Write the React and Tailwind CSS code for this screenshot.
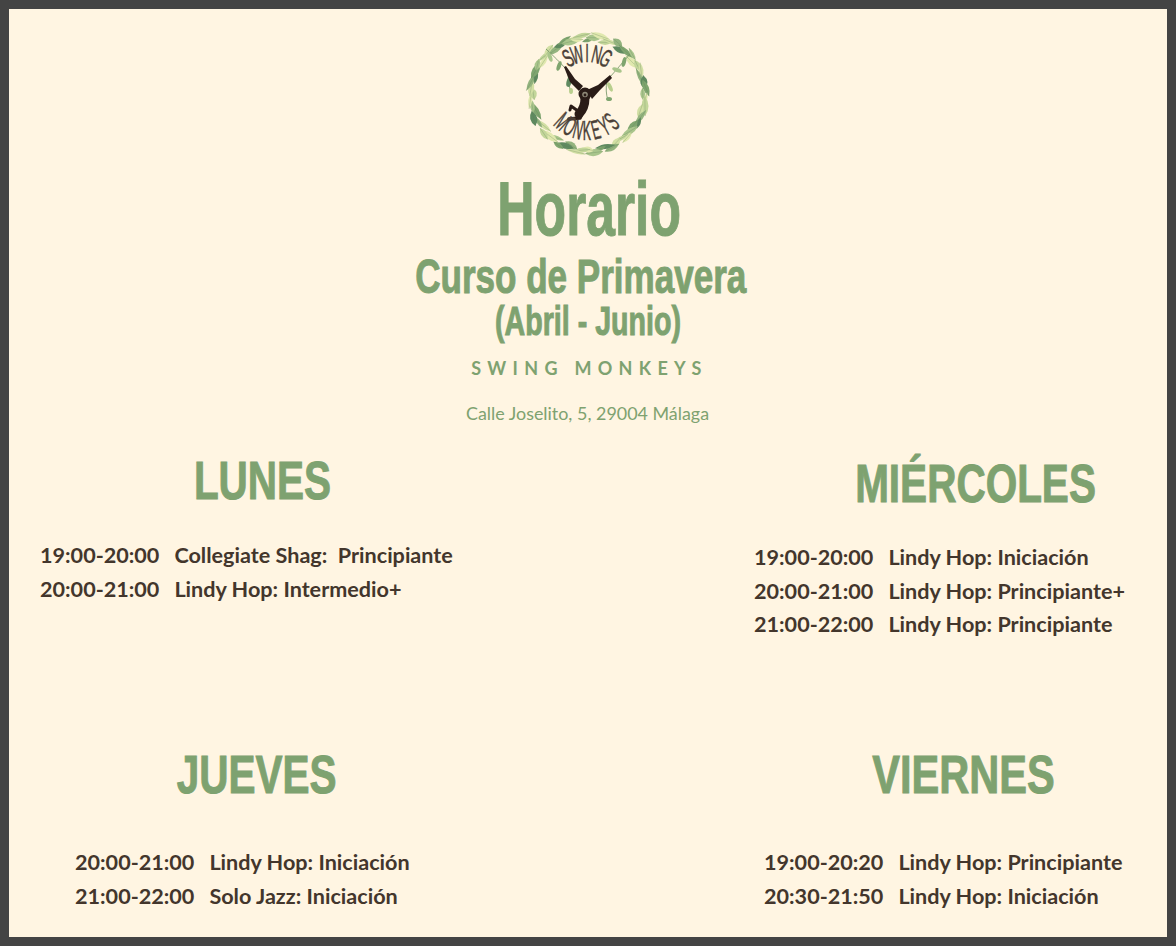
const LEAF_COLORS = ['#7fa56f', '#c3d69a', '#5f8a60', '#e0e8ae', '#94b47f', '#a9c58c', '#d2dfa4'];

// wreath, spread by hand-ish jitter so it doesn't look like a gear
const LEAVES = Array.from({ length: 60 }, (_, i) => {
  const wob = (i * 37) % 11;
  return {
    a: (i / 60) * 360,
    r: 54 + (i % 3) * 2 + wob * 0.15,
    color: LEAF_COLORS[(i * 5) % 7],
    len: 6 + ((i * 7) % 5),
    tilt: ((i * 13) % 36) - 18,
    w: 2 + ((i * 3) % 4) * 0.5,
  };
});

const TOP_LETTERS = 'SWING'.split('');
const BOTTOM_LETTERS = 'MONKEYS'.split('');

function Logo() {
  return (
    <svg viewBox="0 0 160 145" className="w-[160px] h-[145px] block" aria-label="Swing Monkeys">
      {LEAVES.map((l, i) => (
        <g key={i} transform={`translate(78 74) rotate(${l.a}) translate(0 ${-l.r}) rotate(${l.tilt})`}>
          <path d={`M ${-l.len} 0 Q 0 ${-l.w * 2} ${l.len} 0 Q 0 ${l.w * 2} ${-l.len} 0 Z`} fill={l.color} />
          <path d={`M ${-l.len} 0 L ${l.len} 0`} stroke="#5c7d52" strokeWidth="0.25" />
        </g>
      ))}

      {/* vines */}
      <path d="M 55 48 Q 48 40 36 29" fill="none" stroke="#6d8f60" strokeWidth="0.8" />
      <path d="M 100 57 Q 108 48 120 34" fill="none" stroke="#6d8f60" strokeWidth="0.8" />
      <path d="M 97 60 Q 95 72 98 80" fill="none" stroke="#6d8f60" strokeWidth="0.8" />
      <path d="M 58 55 L 60 70" fill="none" stroke="#6d8f60" strokeWidth="0.8" />
      <ellipse cx="40" cy="37" rx="2" ry="5" fill="#a9c58c" transform="rotate(-20 40 37)" />
      <ellipse cx="49" cy="46" rx="2" ry="5" fill="#7fa56f" transform="rotate(20 49 46)" />
      <ellipse cx="114" cy="42" rx="2" ry="5" fill="#7fa56f" transform="rotate(15 114 42)" />
      <ellipse cx="107" cy="50" rx="5" ry="2" fill="#a9c58c" transform="rotate(20 107 50)" />
      <ellipse cx="100" cy="67" rx="2" ry="5" fill="#b9cf8e" transform="rotate(-25 100 67)" />
      <ellipse cx="99" cy="79" rx="3" ry="2" fill="#7fa56f" />
      <ellipse cx="59" cy="62" rx="2.5" ry="5" fill="#5f8a60" transform="rotate(15 59 62)" />
      <ellipse cx="61" cy="71" rx="2" ry="3" fill="#b9cf8e" />

      {/* gibbon */}
      <path d="M54 47 L56 46 L65 59 L73 66 L69 71 L60 62 Z" fill="#2a1c17" />
      <path d="M100 55 L102 58 L90 70 L82 79 L77 70 L88 65 Z" fill="#2a1c17" />
      <g fill="none" stroke="#2a1c17" strokeLinecap="round" strokeLinejoin="round">
        <path d="M 75 78 Q 75 88 69 94" strokeWidth="9" />
        <path d="M 68 91 L 61 86 L 60 90" strokeWidth="3" />
        <path d="M 72 93 L 70 98 L 59 99" strokeWidth="3.5" />
      </g>
      <circle cx="75" cy="74" r="6.5" fill="#2a1c17" />
      <circle cx="75" cy="74.5" r="2.8" fill="#8f8a78" />
      <circle cx="75" cy="75" r="1.4" fill="#2a1c17" />

      {TOP_LETTERS.map((ch, i) => {
        const deg = -28 + i * 14;
        return (
          <text
            key={ch}
            transform={`translate(77 74) rotate(${deg}) translate(0 -32) scale(0.52 1)`}
            textAnchor="middle"
            stroke="#4a3f37"
            strokeWidth="0.5"
            className="fill-[#4a3f37] font-['Liberation_Sans',sans-serif] text-[25px]"
          >{ch}</text>
        );
      })}
      {BOTTOM_LETTERS.map((ch, i) => {
        const deg = -42 + i * 14;
        return (
          <text
            key={ch}
            transform={`translate(77 74) rotate(${-deg}) translate(0 46) scale(0.46 1)`}
            textAnchor="middle"
            stroke="#4a3f37"
            strokeWidth="0.5"
            className="fill-[#4a3f37] font-['Liberation_Sans',sans-serif] text-[27px]"
          >{ch}</text>
        );
      })}
    </svg>
  );
}

const HAND = "font-['Liberation_Sans',sans-serif] font-bold text-[#7ea270] whitespace-nowrap [-webkit-text-stroke:1px_#7ea270]";

function Day({ title, titleClass, rows, className, rowClass }) {
  return (
    <section className={className}>
      <h2 className={`${HAND} w-fit text-[54px] leading-[60px] scale-x-[.75] ${titleClass}`}>{title}</h2>
      <ul className={`font-['Lato',sans-serif] font-bold text-[21.6px] leading-[33.6px] text-[#43362c] ${rowClass}`}>
        {rows.map(([time, name]) => (
          <li key={time} className="flex gap-[15px] whitespace-pre">
            <span>{time}</span>
            <span>{name}</span>
          </li>
        ))}
      </ul>
    </section>
  );
}

export default function App() {
  return (
    <div className="w-[1176px] h-[946px] overflow-hidden border-[9px] border-[#444444] bg-[#fff5e2]">
      <header className="flex flex-col items-center pl-[3px] pt-[11px]">
        <Logo />
        <h1 className={`${HAND} text-[76px] leading-[80px] mt-[4px] scale-x-[.68]`}>Horario</h1>
        <p className={`${HAND} text-[48px] leading-[52px] mt-[2px] mr-[17px] scale-x-[.73]`}>Curso de Primavera</p>
        <p className={`${HAND} text-[40px] leading-[44px] -mt-[4px] mr-[4px] scale-x-[.715]`}>(Abril - Junio)</p>
        <p className="mt-[14px] font-['Lato',sans-serif] font-bold text-[18px] leading-[22px] tracking-[0.35em] text-[#7ea270]">SWING MONKEYS</p>
        <p className="mt-[22px] mr-[4px] font-['Lato',sans-serif] text-[17.9px] leading-[24px] text-[#7ea270]">Calle Joselito, 5, 29004 Málaga</p>
      </header>

      <div className="mt-[25px] grid grid-cols-2 grid-rows-[294px_auto]">
        <Day
          title="LUNES"
          titleClass="ml-[162px]"
          rowClass="mt-[29px] ml-[31px]"
          rows={[['19:00-20:00', 'Collegiate Shag:  Principiante'], ['20:00-21:00', 'Lindy Hop: Intermedio+']]}
        />
        <Day
          title="MIÉRCOLES"
          titleClass="ml-[227px] mt-[3px]"
          rowClass="mt-[28px] ml-[166px]"
          rows={[['19:00-20:00', 'Lindy Hop: Iniciación'], ['20:00-21:00', 'Lindy Hop: Principiante+'], ['21:00-22:00', 'Lindy Hop: Principiante']]}
        />
        <Day
          title="JUEVES"
          titleClass="ml-[141px]"
          rowClass="mt-[42px] ml-[66px]"
          rows={[['20:00-21:00', 'Lindy Hop: Iniciación'], ['21:00-22:00', 'Solo Jazz: Iniciación']]}
        />
        <Day
          title="VIERNES"
          titleClass="ml-[257px] scale-x-[.77]"
          rowClass="mt-[42px] ml-[176px]"
          rows={[['19:00-20:20', 'Lindy Hop: Principiante'], ['20:30-21:50', 'Lindy Hop: Iniciación']]}
        />
      </div>
    </div>
  );
}
